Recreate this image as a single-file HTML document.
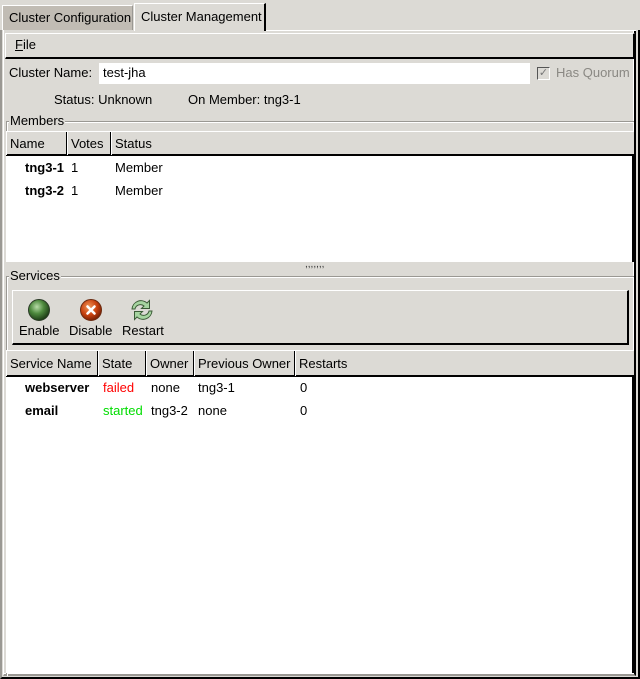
<!DOCTYPE html>
<html><head><meta charset="utf-8"><style>
*{margin:0;padding:0;box-sizing:border-box}
body{width:640px;height:679px;background:#dcdad5;font-family:"Liberation Sans","DejaVu Sans",sans-serif;font-size:13px;color:#000;position:relative;overflow:hidden}
.a{position:absolute;white-space:nowrap}
.tree{background:#fff}
.hdr{position:absolute;height:25px;background:#dcdad5;border-top:1px solid #fff;border-bottom:2px solid #000}
.col{position:absolute;top:0;height:23px;border-right:1px solid #000;box-shadow:1px 0 0 #fff inset;padding:4px 0 0 4px}
b{font-weight:bold}
</style></head><body>
<div class="a" style="left:0;top:30px;width:640px;height:649px;border-left:2px solid #9a9893;border-right:2px solid #000;border-bottom:2px solid #000"></div>
<div class="a" style="left:3px;top:30px;width:633px;height:646px;border-left:1px solid #fff;border-right:2px solid #000;border-bottom:2px solid #9a9893;box-shadow:inset -1px -1px 0 #fff"></div>
<div class="a" style="left:2px;top:5px;width:131px;height:25px;background:#c1bcb4;border:1px solid #fff;border-bottom:none;border-right:1px solid #9a9893"></div>
<div class="a" style="left:9px;top:10px">Cluster Configuration</div>
<div class="a" style="left:134px;top:3px;width:132px;height:28px;background:#dcdad5;border-left:1px solid #fff;border-top:1px solid #fff;border-right:2px solid #000"></div>
<div class="a" style="left:141px;top:9px">Cluster Management</div>
<div class="a" style="left:266px;top:30px;width:370px;height:1px;background:#fff"></div>
<div class="a" style="left:5px;top:33px;width:630px;height:26px;border-top:1px solid #fff;border-left:1px solid #fff;border-bottom:2px solid #000;border-right:2px solid #000"></div>
<div class="a" style="left:15px;top:37px"><u>F</u>ile</div>
<div class="a" style="left:9px;top:65px">Cluster Name:</div>
<div class="a" style="left:99px;top:63px;width:431px;height:21px;background:#fff"></div>
<div class="a" style="left:103px;top:65px">test-jha</div>
<div class="a" style="left:537px;top:67px;width:13px;height:13px;border:1px solid #555;border-right-color:#fff;border-bottom-color:#fff;background:#dcdad5;color:#777;font-size:11px;line-height:11px;text-align:center">✓</div>
<div class="a" style="left:556px;top:65px;color:#8a8883">Has Quorum</div>
<div class="a" style="left:54px;top:92px">Status: Unknown</div>
<div class="a" style="left:188px;top:92px">On Member: tng3-1</div>
<div class="a" style="left:6px;top:121px;width:628px;height:141px;border-top:1px solid #9a9893;border-left:1px solid #9a9893;box-shadow:inset 1px 1px 0 #fff"></div>
<div class="a" style="left:9px;top:113px;background:#dcdad5;padding:0 1px">Members</div>
<div class="a tree" style="left:6px;top:131px;width:628px;height:131px;border-right:2px solid #000"></div>
<div class="hdr" style="left:6px;top:131px;width:628px">
<div class="col" style="left:0;width:61px">Name</div>
<div class="col" style="left:61px;width:44px">Votes</div>
<div class="col" style="left:105px;width:522px;border-right:none">Status</div></div>
<div class="a" style="left:25px;top:160px"><b>tng3-1</b></div><div class="a" style="left:71px;top:160px">1</div><div class="a" style="left:115px;top:160px">Member</div>
<div class="a" style="left:25px;top:183px"><b>tng3-2</b></div><div class="a" style="left:71px;top:183px">1</div><div class="a" style="left:115px;top:183px">Member</div>
<div class="a" style="left:305px;top:263px;font-size:10px;color:#333;line-height:4px">,,,,,,,</div>
<div class="a" style="left:6px;top:276px;width:628px;height:400px;border-top:1px solid #9a9893;border-left:1px solid #9a9893;box-shadow:inset 1px 1px 0 #fff"></div>
<div class="a" style="left:9px;top:268px;background:#dcdad5;padding:0 1px">Services</div>
<div class="a" style="left:12px;top:290px;width:617px;height:55px;border-top:1px solid #fff;border-left:1px solid #fff;border-right:2px solid #000;border-bottom:2px solid #000"></div>
<svg class="a" style="left:27px;top:298px" width="24" height="24"><defs><radialGradient id="g" cx="40%" cy="35%" r="65%"><stop offset="0" stop-color="#b8dca8"/><stop offset=".5" stop-color="#4e8a3e"/><stop offset="1" stop-color="#1d3d16"/></radialGradient></defs><circle cx="12" cy="12" r="10.5" fill="url(#g)" stroke="#2a3a26"/></svg>
<svg class="a" style="left:79px;top:298px" width="24" height="24"><defs><radialGradient id="r" cx="40%" cy="35%" r="65%"><stop offset="0" stop-color="#f0985a"/><stop offset=".6" stop-color="#c8410f"/><stop offset="1" stop-color="#7a2205"/></radialGradient></defs><circle cx="12" cy="12" r="10.5" fill="url(#r)" stroke="#6a2a10"/><path d="M8.5 8.5l7 7M15.5 8.5l-7 7" stroke="#fff" stroke-width="2.6" stroke-linecap="round"/></svg>
<svg class="a" style="left:129px;top:297px" width="26" height="26"><path d="M3 12a9 9 0 0 1 15-6l2.5-2.5v8h-8l2.5-2.5a5.5 5.5 0 0 0-9 3z" fill="#a6d4a0" stroke="#3b5a36"/><path d="M23 14a9 9 0 0 1-15 6l-2.5 2.5v-8h8l-2.5 2.5a5.5 5.5 0 0 0 9-3z" fill="#a6d4a0" stroke="#3b5a36"/></svg>
<div class="a" style="left:19px;top:323px">Enable</div>
<div class="a" style="left:69px;top:323px">Disable</div>
<div class="a" style="left:122px;top:323px">Restart</div>
<div class="a tree" style="left:6px;top:350px;width:628px;height:323px;border-right:2px solid #000"></div>
<div class="hdr" style="left:6px;top:350px;width:628px;height:27px">
<div class="col" style="left:0;width:92px;height:25px;padding-top:5px">Service Name</div>
<div class="col" style="left:92px;width:48px;height:25px;padding-top:5px">State</div>
<div class="col" style="left:140px;width:48px;height:25px;padding-top:5px">Owner</div>
<div class="col" style="left:188px;width:101px;height:25px;padding-top:5px">Previous Owner</div>
<div class="col" style="left:289px;width:338px;height:25px;border-right:none;padding-top:5px">Restarts</div></div>
<div class="a" style="left:25px;top:380px"><b>webserver</b></div><div class="a" style="left:103px;top:380px;color:#f00">failed</div><div class="a" style="left:151px;top:380px">none</div><div class="a" style="left:198px;top:380px">tng3-1</div><div class="a" style="left:300px;top:380px">0</div>
<div class="a" style="left:25px;top:403px"><b>email</b></div><div class="a" style="left:103px;top:403px;color:#0d0">started</div><div class="a" style="left:151px;top:403px">tng3-2</div><div class="a" style="left:198px;top:403px">none</div><div class="a" style="left:300px;top:403px">0</div>
</body></html>
